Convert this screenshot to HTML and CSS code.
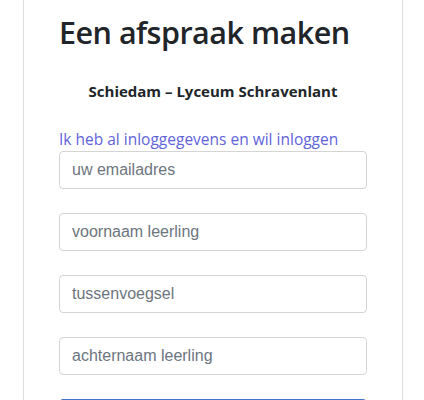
FILE: index.html
```html
<!DOCTYPE html>
<html lang="nl">
<head>
<meta charset="utf-8">
<link rel="stylesheet" href="styles.css">
</head>
<body>
<div class="page">
  <div class="card">
    <h1 class="title">Een afspraak maken</h1>
    <h2 class="subtitle">Schiedam – Lyceum Schravenlant</h2>
    <a class="login-link" href="#">Ik heb al inloggegevens en wil inloggen</a>
    <form class="form">
      <input class="field" type="text" placeholder="uw emailadres">
      <input class="field" type="text" placeholder="voornaam leerling">
      <input class="field" type="text" placeholder="tussenvoegsel">
      <input class="field" type="text" placeholder="achternaam leerling">
      <button class="submit" type="button">Verder</button>
    </form>
  </div>
</div>
</body>
</html>
```

FILE: styles.css
```css
html, body {
  margin: 0;
  padding: 0;
  background: #fff;
  overflow: hidden;
}
body {
  font-family: "Open Sans", "Noto Sans", sans-serif;
  color: #212529;
}
.page {
  padding-left: 23px;
}
.card {
  border-left: 1px solid #dedede;
  border-right: 1px solid #dedede;
  padding: 0 35px;
  box-sizing: content-box;
  width: 308px;
  min-height: 400px;
}
.title {
  margin: 0;
  padding-top: 8px;
  font-size: 30.5px;
  font-weight: 600;
  line-height: 48px;
  letter-spacing: -0.5px;
  color: #212529;
}
.subtitle {
  margin: 24px 0 0;
  text-align: center;
  font-size: 15px;
  font-weight: 700;
  line-height: 22px;
}
.login-link {
  display: block;
  margin-top: 26px;
  font-size: 15.5px;
  line-height: 22px;
  color: #6163d9;
  text-decoration: none;
}
.form {
  display: flex;
  flex-direction: column;
  gap: 24px;
  padding-top: 1px;
}
.field {
  display: block;
  box-sizing: border-box;
  width: 308px;
  height: 38px;
  margin: 0;
  padding: 0 12px;
  border: 1px solid #d4d4d4;
  border-radius: 4px;
  font-family: "Liberation Sans", Arial, sans-serif;
  font-size: 16px;
  color: #495057;
  background: #fff;
}
.field::placeholder {
  color: #6c757d;
  opacity: 1;
}
.submit {
  display: block;
  width: 308px;
  height: 38px;
  border: 1px solid #4472c4;
  border-radius: 4px;
  background: #4a77c4;
  color: #fff;
  font-size: 16px;
}
```
